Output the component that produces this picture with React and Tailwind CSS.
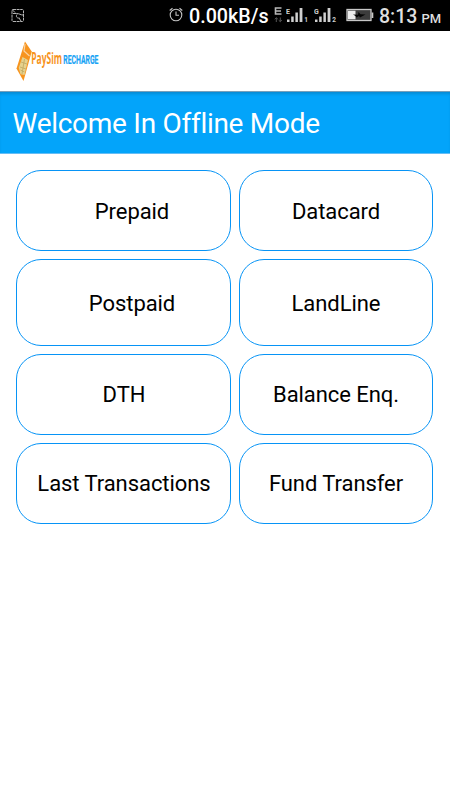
import React from 'react';

const menuItems = [
  { label: 'Prepaid', className: 'h-[81px] pl-[17px] pt-[2px]' },
  { label: 'Datacard', className: 'h-[81px] pt-[2px]' },
  { label: 'Postpaid', className: 'h-[87px] pl-[17px] pt-[2px]' },
  { label: 'LandLine', className: 'h-[87px] pt-[2px]' },
  { label: 'DTH', className: 'h-[81px] pl-[1px]' },
  { label: 'Balance Enq.', className: 'h-[81px]' },
  { label: 'Last Transactions', className: 'h-[81px] pl-[1px]' },
  { label: 'Fund Transfer', className: 'h-[81px]' },
];

const NoticeIcon = () => (
  <svg width="14" height="15" viewBox="0 0 14 15" fill="none" stroke="#b5b5b5">
    <rect x="1" y="1.5" width="11.5" height="12" rx="1" strokeDasharray="3 0.6" />
    <path d="M1.5 2l2.500 2.500M2 5.500h3.500c3 0 4 1.500 6.500 1.500M6 6.500c-1.500 2 0 4 2.500 3.500M8 10l2 3" />
  </svg>
);

const AlarmIcon = () => (
  <svg width="14" height="15" viewBox="0 0 14 15" fill="none" stroke="#c4c4c4" strokeWidth="1.1">
    <circle cx="7" cy="8" r="5.800" />
    <path d="M7 4.500v3.700h3M.7 3.500L3.500 1.200M13.300 3.500L10.500 1.200" />
  </svg>
);

const DataIcon = () => (
  <svg width="9" height="16" viewBox="0 0 9 16" fill="none">
    <path d="M7.500 1H1.500v6h6M1.500 4h5.500" stroke="#b8b8b8" strokeWidth="1.600" />
    <path d="M2.300 15v-4M.7 12.200l1.600-1.500 1.600 1.500M6.300 10.500v4M4.700 13.200l1.600 1.500 1.600-1.500" stroke="#555" />
  </svg>
);

const SignalIcon = ({ network, sim }) => (
  <svg width="23" height="17" viewBox="0 0 23 17" fill="#d0d0d0">
    <rect x="1" y="11.500" width="2.500" height="2.500" />
    <rect x="5.200" y="8.500" width="2.500" height="5.500" />
    <rect x="9.400" y="4.500" width="2.500" height="9.500" />
    <rect x="13.600" y="0" width="2.800" height="14" />
    <text x="0" y="5.500" fontSize="7" fontWeight="700">{network}</text>
    <text x="18.300" y="14" fontSize="6.500" fontWeight="700">{sim}</text>
  </svg>
);

const BatteryIcon = () => (
  <svg width="28" height="14" viewBox="0 0 28 14">
    <rect x="1" y="1.500" width="24" height="11" fill="#3c3c3c" stroke="#c8c8c8" strokeWidth="1.300" />
    <rect x="2" y="2.700" width="7.500" height="8.600" fill="#ededed" />
    <rect x="25.600" y="4.500" width="1.700" height="5.500" fill="#c8c8c8" />
    <path d="M7 6.500l5 .2L12.500 4l2 2.300 5 .2-5.500 3-1-1.500-2.500 1.500L9.500 8z" fill="#050505" />
  </svg>
);

const StatusBar = () => (
  <div className="flex h-[31px] bg-black text-[#dedede]">
    <div className="ml-[11px] mt-2">
      <NoticeIcon />
    </div>
    <div className="ml-[144px] mt-[7px] w-[14px]">
      <AlarmIcon />
    </div>
    <span className="ml-[6px] mt-[2px] w-[80px] whitespace-nowrap text-[19.7px] font-medium leading-[30px] text-white">0.00kB/s</span>
    <div className="ml-[5px] mt-[7px] w-[9px]">
      <DataIcon />
    </div>
    <div className="ml-[3px] mt-[8px] w-[23px]">
      <SignalIcon network="E" sim="1" />
    </div>
    <div className="ml-[5px] mt-[8px] w-[23px]">
      <SignalIcon network="G" sim="2" />
    </div>
    <div className="ml-[9px] mt-[8px] w-[28px]">
      <BatteryIcon />
    </div>
    <div className="ml-[5px] mt-[2px] flex items-baseline gap-1 whitespace-nowrap leading-[30px]">
      <span className="text-[19.5px] font-medium">8:13</span>
      <span className="text-[13px] font-medium">PM</span>
    </div>
  </div>
);

const Logo = () => (
  <svg width="100" height="42" viewBox="0 0 100 42" role="img" aria-label="PaySim Recharge">
    <path d="M9 .5L15.700 10.500L7.500 40L.5 27.500z" fill="#f7941e" />
    <path d="M9 3L8 10L13.500 15" fill="none" stroke="#fbd3a2" strokeWidth="1.200" />
    <path d="M6.500 16l5.500 3-3.500 15-4-.8-1.700-6.500z" fill="#e7d28d" />
    <path d="M5 21l6 2M4 26l6 2M8.500 18L6 33M4.500 29l4 2" stroke="#b9a45d" strokeWidth=".7" />
    <text transform="translate(15.300 22.500) scale(.545 1)" fontFamily="Open Sans, sans-serif" fontSize="15.500" fontWeight="700" fill="#f7941e">PaySim</text>
    <text transform="translate(47.300 22.800) scale(.54 1)" fontFamily="Roboto, sans-serif" fontSize="12.700" fontWeight="700" fill="#16a3f5" stroke="#16a3f5" strokeWidth=".2">RECHARGE</text>
  </svg>
);

const App = () => {
  return (
    <div className="min-h-[800px] w-[450px] overflow-hidden bg-white font-['Roboto',sans-serif]">
      <StatusBar />

      <header className="h-[60px] bg-white pl-4 pt-[10px]">
        <Logo />
      </header>

      {/* Page title */}
      <div className="h-[63px] border-b border-[#65bdf5] border-t border-t-[#799fb9] bg-[#03a4fa] pl-[12.5px] shadow-[inset_0_3px_3px_-1px_#078bd4]">
        <h1 className="whitespace-nowrap text-[28px] leading-[64px] tracking-[-0.28px] text-white">Welcome In Offline Mode</h1>
      </div>

      {/* Recharge options */}
      <main className="grid grid-cols-[215px_194px] gap-2 pl-4 pt-4">
        {menuItems.map(({ label, className }) => (
          <button
            key={label}
            className={`flex items-center justify-center whitespace-nowrap rounded-[25px] border border-[#0794f6] bg-white text-[22px] tracking-[-0.06px] text-black ${className}`}
          >
            {label}
          </button>
        ))}
      </main>
    </div>
  );
};

export default App;
